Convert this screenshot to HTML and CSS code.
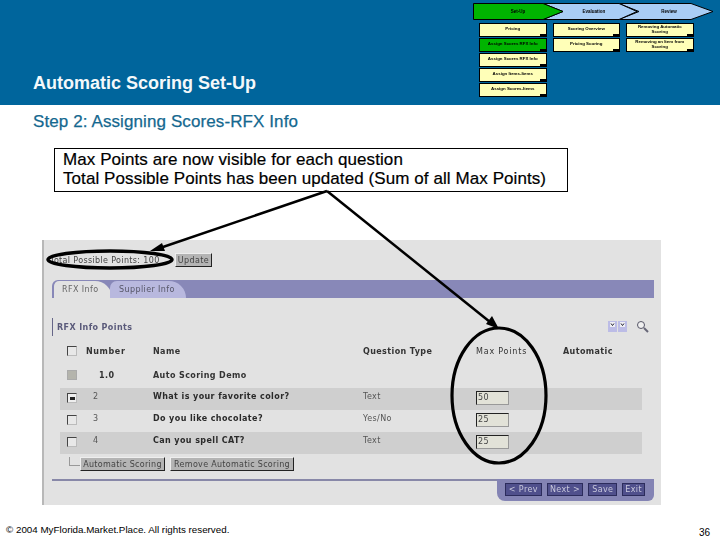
FILE: index.html
```html
<!DOCTYPE html>
<html lang="en">
<head>
<meta charset="utf-8">
<title>Automatic Scoring Set-Up</title>
<link rel="stylesheet" href="styles.css">
</head>
<body>
<div class="slide">
  <header class="head">
    <h1 class="title">Automatic Scoring Set-Up</h1>
    <div class="flow">
      <svg class="chevrons" width="241" height="17" viewBox="0 0 241 17">
        <path d="M146 .5H218L240 8.500L218 16.500H146L166 8.500Z" fill="#a9cdf5" stroke="#000"/>
        <path d="M70 .5H146L164 8.500L146 16.500H70L90 8.500Z" fill="#a9cdf5" stroke="#000"/>
        <path d="M.5 .5H70L90 8.500L70 16.500H.5Z" fill="#00b400" stroke="#000"/>
        <text x="45" y="10" class="chev-text">Set-Up</text>
        <text x="121" y="10" class="chev-text">Evaluation</text>
        <text x="196" y="10" class="chev-text">Review</text>
      </svg>
      <div class="flow-cols">
        <div class="flow-col">
          <div class="note">Pricing</div>
          <div class="note note-on">Assign Scores RFX Info</div>
          <div class="note">Assign Scores RFX Info</div>
          <div class="note">Assign Items-Items</div>
          <div class="note">Assign Scores-Items</div>
        </div>
        <div class="flow-col">
          <div class="note">Scoring Overview</div>
          <div class="note">Pricing Scoring</div>
        </div>
        <div class="flow-col">
          <div class="note">Removing Automatic Scoring</div>
          <div class="note">Removing an Item from Scoring</div>
        </div>
      </div>
    </div>
  </header>

  <h2 class="step">Step 2: Assigning Scores-RFX Info</h2>

  <div class="callout">
    Max Points are now visible for each question<br>
    Total Possible Points has been updated (Sum of all Max Points)
  </div>

  <section class="shot">
    <div class="update-row">
      <span class="total">Total Possible Points: 100</span>
      <span class="btn">Update</span>
    </div>
    <div class="tabs">
      <span class="tab tab-on">RFX Info</span>
      <span class="tab tab-off">Supplier Info</span>
    </div>
    <div class="section-head">
      <span class="section-title">RFX Info Points</span>
      <span class="tools">
        <svg width="41" height="14" viewBox="0 0 41 14">
          <rect x="0" y="2" width="9" height="11" fill="#bcbce6"/>
          <rect x="10" y="2" width="9" height="11" fill="#bcbce6"/>
          <rect x="2" y="3" width="5" height="5" fill="#eeeef4"/>
          <rect x="12" y="3" width="5" height="5" fill="#eeeef4"/>
          <path d="M3 4.500l1.500 2l1.500-2M13 4.500l1.500 2l1.500-2" fill="none" stroke="#223"/>
          <circle cx="33" cy="6" r="3.500" fill="#f0f0f0" stroke="#556"/>
          <path d="M36 9l4 4" stroke="#667" stroke-width="2"/>
        </svg>
      </span>
    </div>

    <div class="grid grid-head">
      <span class="box"></span><span class="head-num">Number</span><span class="gap"></span><span>Name</span><span>Question Type</span><span class="thin">Max Points</span><span>Automatic</span>
    </div>
    <div class="grid grid-demo">
      <span class="box box-off"></span><span class="demo-num">1.0</span><span class="gap"></span><span>Auto Scoring Demo</span><span></span><span></span><span></span>
    </div>
    <div class="grid row row-dark">
      <span class="box box-on"></span><span class="num">2</span><span class="gap"></span><span class="q">What is your favorite color?</span><span class="type">Text</span><span class="input">50</span><span></span>
    </div>
    <div class="grid row">
      <span class="box"></span><span class="num">3</span><span class="gap"></span><span class="q">Do you like chocolate?</span><span class="type">Yes/No</span><span class="input">25</span><span></span>
    </div>
    <div class="grid row row-dark">
      <span class="box"></span><span class="num">4</span><span class="gap"></span><span class="q">Can you spell CAT?</span><span class="type">Text</span><span class="input">25</span><span></span>
    </div>
    <div class="actions">
      <span class="elbow"></span>
      <span class="btn btn-wide">Automatic Scoring</span>
      <span class="btn btn-wider">Remove Automatic Scoring</span>
    </div>
    <div class="nav-row">
      <div class="nav-line"></div>
      <div class="nav">
        <span class="nav-btn nav-a">&lt; Prev</span>
        <span class="nav-btn nav-a">Next &gt;</span>
        <span class="nav-btn nav-b">Save</span>
        <span class="nav-btn nav-c">Exit</span>
      </div>
    </div>
  </section>

  <footer class="foot">
    <span class="copy">© 2004 MyFlorida.Market.Place. All rights reserved.</span>
    <span class="page">36</span>
  </footer>

  <svg class="marks" width="720" height="540" viewBox="0 0 720 540">
    <ellipse cx="110" cy="259.500" rx="62" ry="8.500" fill="none" stroke="#000" stroke-width="3.500"/>
    <ellipse cx="499" cy="395.500" rx="47" ry="67.500" fill="none" stroke="#000" stroke-width="3.200"/>
    <path d="M327 191L160 248" stroke="#000" stroke-width="2.500"/>
    <path d="M150 251L162 243L165 251Z" fill="#000"/>
    <path d="M327 191L490 322" stroke="#000" stroke-width="2.500"/>
    <path d="M499 329L486 324L492 316Z" fill="#000"/>
  </svg>
</div>
</body>
</html>
```

FILE: styles.css
```css
* { box-sizing: border-box; }
html, body { margin: 0; padding: 0; background: #fff; }
.slide { position: relative; width: 720px; height: 540px; overflow: hidden; font-family: "Liberation Sans", Arial, sans-serif; }

.head { height: 105px; background: #00659c; display: flex; justify-content: space-between; padding: 3px 6px 0 33px; }
.title { margin: 70px 0 0; font-size: 18px; line-height: 21px; font-weight: bold; color: #f4f8fa; white-space: nowrap; }
.flow { width: 241px; filter: blur(.25px); }
.chevrons { display: block; }
.chev-text { font: bold 4.500px "Liberation Sans", sans-serif; fill: #000; text-anchor: middle; }
.flow-cols { display: flex; gap: 6px; padding: 3px 0 0 6px; }
.flow-col { width: 67.500px; display: flex; flex-direction: column; gap: 1.500px; }
.note { position: relative; height: 13.500px; background: #ffffb8; border: 1px solid #000; border-width: 1px 1.500px 1.500px 1px; font-size: 4.400px; font-weight: bold; line-height: 4.600px; color: #000; display: flex; align-items: center; justify-content: center; text-align: center; padding: 0 5px; }
.note::after { content: ""; position: absolute; right: 0; bottom: 0; width: 6px; height: 2px; background: #000; }
.note-on { background: #00b400; }

.step { margin: 0; padding: 1px 0 0 33px; height: 32px; font-size: 17px; line-height: 32px; letter-spacing: .1px; font-weight: normal; color: #14688f; -webkit-text-stroke: .25px #14688f; white-space: nowrap; }
.callout { margin: 11px 0 0 54px; width: 514px; height: 44px; border: 1px solid #000; padding: 1px 0 0 8px; font-size: 17px; line-height: 19px; letter-spacing: .08px; color: #000; -webkit-text-stroke: .2px #000; white-space: nowrap; }

.shot { margin: 48px 0 0 42px; width: 619px; height: 265px; background: #e2e2e2; border-left: 2px solid #b8b8b8; padding: 13px 7px 0 8px; font-family: "DejaVu Sans", sans-serif; font-size: 8px; letter-spacing: .4px; color: #2a2a2a; filter: blur(.35px); }
.update-row { display: flex; align-items: center; height: 14px; }
.total { width: 123px; color: #444; white-space: nowrap; margin-left: -2px; letter-spacing: .35px; }
.btn { display: flex; align-items: center; justify-content: center; height: 14px; width: 37px; background: #b4b4b4; border: 1px solid; border-color: #eee #222 #222 #eee; color: #444; white-space: nowrap; margin-left: 2px; }
.tabs { margin-top: 13px; height: 18px; background: #8888b8; display: flex; border-radius: 6px 0 0 0; padding-left: 2px; padding-top: 1px; }
.tab { height: 17px; display: flex; align-items: center; white-space: nowrap; color: #666; }
.tab-on { width: 58px; background: #e2e2e2; border-radius: 6px 20px 0 0; padding-left: 8px; }
.tab-off { width: 76px; margin-left: -2px; background: #b8b8de; border-radius: 8px 20px 0 0; padding-left: 9px; color: #556; }

.section-head { margin-top: 20px; height: 18px; border-left: 1px solid #666688; padding-left: 4px; display: flex; align-items: center; justify-content: space-between; }
.section-title { font-weight: bold; color: #5a5a7a; }
.tools { display: flex; margin-right: 5px; margin-top: -2px; }

.grid { display: grid; grid-template-columns: 19px 4px 63px 210px 113px 87px 1fr; padding-left: 7px; margin-right: 12px; margin-left: 8px; align-items: center; white-space: nowrap; }
.gap { display: block; }
.grid-head { margin-top: 8px; height: 14px; font-weight: bold; color: #333; }
.head-num { width: 60px; letter-spacing: .6px; }
.grid-head .thin { font-weight: normal; letter-spacing: .8px; }
.grid-demo { margin-top: 8px; height: 22px; padding-bottom: 4px; font-weight: bold; color: #333; }
.demo-num { margin-left: 13px; }
.row { height: 22px; padding-bottom: 2px; }
.row-dark { background: #cfcfcf; }
.num { margin-left: 7px; color: #555; padding-bottom: 3px; }
.q { font-weight: bold; color: #2a2a2a; padding-bottom: 3px; }
.type { color: #555; padding-bottom: 3px; }
.box { width: 10px; height: 10px; background: #e8e8e8; border: 1px solid; border-color: #444 #bbb #bbb #444; display: block; }
.box-off { background: #b4b4ac; border-color: #aaa; }
.box-on { background: linear-gradient(#222, #222) center / 5px 3px no-repeat #eee; }
.input { width: 33px; height: 14px; background: #e2e2d8; border: 1px solid; border-color: #222 #999 #999 #222; padding-left: 1px; line-height: 12px; color: #444; }

.actions { display: flex; align-items: flex-start; margin: 3px 0 0 17px; height: 14px; }
.elbow { width: 11px; height: 9px; border-left: 1px solid #999; border-bottom: 1px solid #999; }
.btn-wide { width: 85px; margin-left: 0; letter-spacing: .3px; }
.btn-wider { width: 124px; margin-left: 5px; letter-spacing: .3px; }

.nav-row { display: flex; align-items: flex-start; margin-top: 8px; }
.nav-line { flex: 1; height: 2px; background: #8888a8; }
.nav { width: 157px; height: 22px; background: #8484b4; border-radius: 0 0 6px 8px; display: flex; gap: 5px; padding: 4px 9px 0 8px; }
.nav-btn { height: 13px; background: #50508c; border: 1px solid #2c2c5c; color: #c8c8dc; display: flex; align-items: center; justify-content: center; white-space: nowrap; }
.nav-a { width: 37px; }
.nav-b { width: 29px; }
.nav-c { width: 23px; }

.foot { display: flex; justify-content: space-between; margin-top: 17px; padding: 0 10px 0 6px; height: 17px; color: #000; }
.copy { font-size: 9.800px; line-height: 15px; }
.page { font-size: 10px; line-height: 22px; }

.marks { position: absolute; left: 0; top: 0; pointer-events: none; }
```
